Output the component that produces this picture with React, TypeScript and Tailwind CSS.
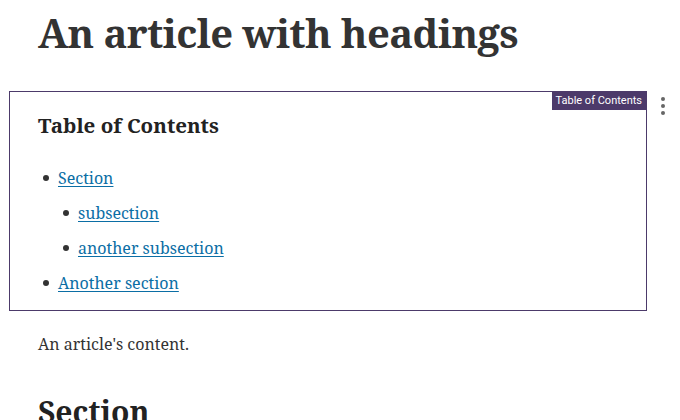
import React from 'react';

const serif = "font-['Noto_Serif','DejaVu_Serif',serif]";

const TocItem = ({ nested, children }: { nested?: boolean; children: React.ReactNode }) => (
  <li className={`flex items-center ${nested ? 'pl-[20px]' : ''}`}>
    <span className="w-[6px] h-[6px] rounded-full bg-[#333] ml-[5px] mr-[9px] -mt-[1px]" />
    <a href="#" className="text-[#0b6ea5] underline underline-offset-2 decoration-1">
      {children}
    </a>
  </li>
);

const App = () => {
  return (
    <div className={`${serif} text-[#333] bg-white w-[680px] h-[420px] overflow-hidden`}>
      <h1 className="text-[40px] font-bold leading-none tracking-[-0.6px] pl-[38px] pt-[13px] text-[#333]">
        An article with headings
      </h1>

      <div className="flex items-start mt-[38px]">
        {/* TOC box */}
        <div className="relative ml-[9px] w-[638px] border border-[#4c3a6a] pl-[28px] pt-[20px] pb-[16px]">
          <span className="absolute top-0 right-0 bg-[#4c3a6a] text-white text-[11px] leading-[18px] px-[4px] font-['Roboto',sans-serif]">
            Table of Contents
          </span>
          <h3 className="text-[20.5px] font-bold leading-[26px] text-[#222]">Table of Contents</h3>
          <ul className="mt-[29px] flex flex-col gap-[13px] text-[16px] leading-[22px]">
            <TocItem>Section</TocItem>
            <TocItem nested>subsection</TocItem>
            <TocItem nested>another subsection</TocItem>
            <TocItem>Another section</TocItem>
          </ul>
        </div>

        {/* kebab menu */}
        <div className="flex flex-col gap-[3px] ml-[14px] mt-[6px]">
          <span className="w-[4px] h-[4px] rounded-full bg-[#666]" />
          <span className="w-[4px] h-[4px] rounded-full bg-[#666]" />
          <span className="w-[4px] h-[4px] rounded-full bg-[#666]" />
        </div>
      </div>

      <p className="pl-[38px] mt-[22px] text-[16px] leading-[22px] text-[#333]">An article's content.</p>

      <h2 className="pl-[38px] mt-[42px] text-[30px] font-bold leading-none text-[#222]">Section</h2>
    </div>
  );
};

export default App;
